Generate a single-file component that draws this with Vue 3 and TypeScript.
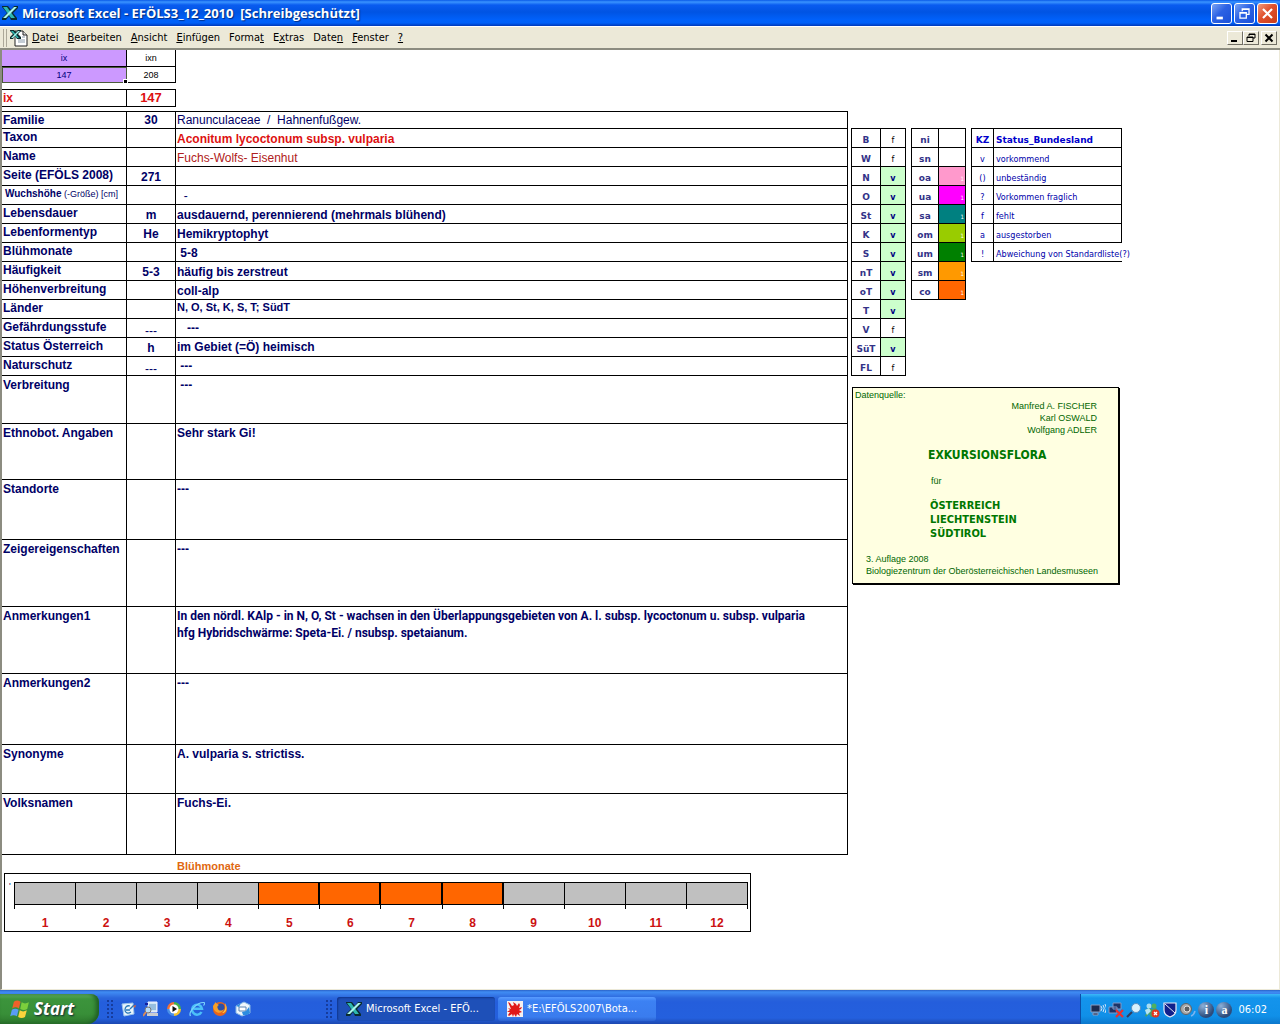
<script setup lang="ts">
interface Row {
  label: string
  code?: string
  value?: string
  height: string
  tone?: string
}

interface MenuEntry {
  before: string
  key: string
  after: string
}

const menu: MenuEntry[] = [
  { before: '', key: 'D', after: 'atei' },
  { before: '', key: 'B', after: 'earbeiten' },
  { before: '', key: 'A', after: 'nsicht' },
  { before: '', key: 'E', after: 'infügen' },
  { before: 'Forma', key: 't', after: '' },
  { before: 'E', key: 'x', after: 'tras' },
  { before: 'Date', key: 'n', after: '' },
  { before: '', key: 'F', after: 'enster' },
  { before: '', key: '?', after: '' },
]

const rows: Row[] = [
  { label: 'Familie', code: '30', value: 'Ranunculaceae  /  Hahnenfußgew.', height: 'h-first', tone: 'plain' },
  { label: 'Taxon', value: 'Aconitum lycoctonum subsp. vulparia', height: 'h-line', tone: 'taxon' },
  { label: 'Name', value: 'Fuchs-Wolfs- Eisenhut', height: 'h-line', tone: 'name' },
  { label: 'Seite (EFÖLS 2008)', code: '271', height: 'h-line' },
  { label: 'Wuchshöhe', value: '  -', height: 'h-line', tone: 'plain' },
  { label: 'Lebensdauer', code: 'm', value: 'ausdauernd, perennierend (mehrmals blühend)', height: 'h-line' },
  { label: 'Lebenformentyp', code: 'He', value: 'Hemikryptophyt', height: 'h-line' },
  { label: 'Blühmonate', value: ' 5-8', height: 'h-line' },
  { label: 'Häufigkeit', code: '5-3', value: 'häufig bis zerstreut', height: 'h-line' },
  { label: 'Höhenverbreitung', value: 'coll-alp', height: 'h-line' },
  { label: 'Länder', value: 'N, O, St, K, S, T; SüdT', height: 'h-line', tone: 'small' },
  { label: 'Gefährdungsstufe', code: '---', value: '   ---', height: 'h-line', tone: 'middle' },
  { label: 'Status Österreich', code: 'h', value: 'im Gebiet (=Ö) heimisch', height: 'h-line', tone: 'middle' },
  { label: 'Naturschutz', code: '---', value: ' ---', height: 'h-line', tone: 'middle' },
  { label: 'Verbreitung', value: ' ---', height: 'h-48', tone: 'top' },
  { label: 'Ethnobot. Angaben', value: 'Sehr stark Gi!', height: 'h-56', tone: 'top' },
  { label: 'Standorte', value: '---', height: 'h-60', tone: 'top' },
  { label: 'Zeigereigenschaften', value: '---', height: 'h-67', tone: 'top' },
  {
    label: 'Anmerkungen1',
    value:
      'In den nördl. KAlp - in N, O, St - wachsen in den Überlappungsgebieten von A. l. subsp. lycoctonum u. subsp. vulparia\nhfg Hybridschwärme: Speta-Ei. / nsubsp. spetaianum.',
    height: 'h-67',
    tone: 'top note',
  },
  { label: 'Anmerkungen2', value: '---', height: 'h-71', tone: 'top' },
  { label: 'Synonyme', value: 'A. vulparia s. strictiss.', height: 'h-49', tone: 'top' },
  { label: 'Volksnamen', value: 'Fuchs-Ei.', height: 'h-61', tone: 'top' },
]

const lands: [string, string][] = [
  ['B', 'f'], ['W', 'f'], ['N', 'v'], ['O', 'v'], ['St', 'v'], ['K', 'v'], ['S', 'v'],
  ['nT', 'v'], ['oT', 'v'], ['T', 'v'], ['V', 'f'], ['SüT', 'v'], ['FL', 'f'],
]

const levels: string[] = ['ni', 'sn', 'oa', 'ua', 'sa', 'om', 'um', 'sm', 'co']

const legend: [string, string][] = [
  ['v', 'vorkommend'],
  ['()', 'unbeständig'],
  ['?', 'Vorkommen fraglich'],
  ['f', 'fehlt'],
  ['a', 'ausgestorben'],
  ['!', 'Abweichung von Standardliste(?)'],
]

const isBloom = (month: number): boolean => month >= 5 && month <= 8
</script>

<template>
  <div class="desktop">
    <header class="titlebar">
      <svg class="icon16" viewBox="0 0 16 16" aria-hidden="true">
        <path d="M0 1h6l3 4 3-4h4v2l-5 5 4 5v2H9l-2-4-3 4H0v-2l5-5-5-6z" fill="#0a2c30" />
        <path d="M1 2h4l8 11H9z" fill="#2fb8b0" />
        <path d="M15 2h-3L1 13h3z" fill="#a8f4ec" />
      </svg>
      <h1>Microsoft Excel - EFÖLS3_12_2010&nbsp; [Schreibgeschützt]</h1>
      <div class="winbtns">
        <button type="button" class="win" aria-label="Minimieren">
          <svg viewBox="0 0 21 21"><path d="M5 14h7v3H5z" fill="#fff" /></svg>
        </button>
        <button type="button" class="win" aria-label="Verkleinern">
          <svg viewBox="0 0 21 21" fill="none" stroke="#fff">
            <path d="M8 8V5.500h7.500v6H13M8 6h8" stroke-width="1.400" />
            <path d="M5.500 9.500h7v6h-7zM5 10h8" stroke-width="1.400" />
          </svg>
        </button>
        <button type="button" class="win close" aria-label="Schließen">
          <svg viewBox="0 0 21 21"><path d="M5.500 5.500l10 10M15.500 5.500l-10 10" stroke="#fff" stroke-width="2.400" /></svg>
        </button>
      </div>
    </header>

    <nav class="menubar" aria-label="Menü">
      <span class="grip"></span>
      <svg class="docicon" viewBox="0 0 18 18" aria-hidden="true">
        <path d="M5 2h8l4 4v11H5z" fill="#fff" stroke="#222" />
        <path d="M13 2v4h4" fill="#ddd" stroke="#222" />
        <path d="M12 8h3M8 11h7M8 13h7" stroke="#8899aa" />
        <path d="M0 1h4l2 2 2-2h3v1L8 5l3 3v2H7L5 7 3 10H0V8l3-3-3-3z" fill="#0a2c30" />
        <path d="M1 2h2l6 7H7z" fill="#2fb8b0" />
        <path d="M10 2H8L1 9h2z" fill="#a8f4ec" />
      </svg>
      <button v-for="m in menu" :key="m.key" type="button" class="menuitem">{{ m.before }}<u>{{ m.key }}</u>{{ m.after }}</button>
      <div class="mdi">
        <button type="button" aria-label="Fenster minimieren">
          <svg viewBox="0 0 14 12"><path d="M3 8h6v2H3z" /></svg>
        </button>
        <button type="button" aria-label="Fenster verkleinern">
          <svg viewBox="0 0 14 12" fill="none" stroke="#000"><path d="M5 4V2h6v4H9M5 2.500h6" /><path d="M3 5h6v4.500H3zM3 5.500h6" /></svg>
        </button>
        <button type="button" class="apart" aria-label="Fenster schließen">
          <svg viewBox="0 0 14 12"><path d="M3.500 2.500l7 7M10.500 2.500l-7 7" stroke="#000" stroke-width="2" /></svg>
        </button>
      </div>
    </nav>

    <main class="sheet">
      <section class="record">
        <table class="grid key">
          <colgroup><col class="c-label" /><col class="c-code" /></colgroup>
          <tbody>
            <tr class="h-first"><td class="violet">ix</td><td>ixn</td></tr>
            <tr class="h-16"><td class="violet selected">147<span class="handle"></span></td><td>208</td></tr>
          </tbody>
        </table>
        <table class="grid current">
          <colgroup><col class="c-label" /><col class="c-code" /></colgroup>
          <tbody>
            <tr class="h-first"><th scope="row">ix</th><td>147</td></tr>
          </tbody>
        </table>
        <table class="grid facts">
          <colgroup><col class="c-label" /><col class="c-code" /><col /></colgroup>
          <tbody>
            <tr v-for="r in rows" :key="r.label" :class="r.height">
              <th v-if="r.label === 'Wuchshöhe'" scope="row" class="tiny">{{ r.label }}<span class="unit"> (-Größe) [cm]</span></th>
              <th v-else scope="row">{{ r.label }}</th>
              <td class="code" :class="{ dash: r.code === '---' }">{{ r.code }}</td>
              <td class="value" :class="r.tone">{{ r.value }}</td>
            </tr>
          </tbody>
        </table>

        <h2>Blühmonate</h2>
        <div class="chart" role="img" aria-label="Blühmonate 5 bis 8">
          <span class="tick">'</span>
          <ol>
            <li v-for="m in 12" :key="m" :class="{ bloom: isBloom(m) }">
              <span class="bar"></span>
              <span class="month">{{ m }}</span>
            </li>
          </ol>
        </div>
      </section>

      <aside class="side">
        <div class="tables">
          <table class="grid boxed lands">
            <colgroup><col class="w29" /><col class="w25" /></colgroup>
            <tbody>
              <tr v-for="l in lands" :key="l[0]" class="h-line">
                <th scope="row">{{ l[0] }}</th>
                <td :class="{ present: l[1] === 'v' }">{{ l[1] }}</td>
              </tr>
            </tbody>
          </table>
          <table class="grid boxed levels">
            <colgroup><col class="w27" /><col class="w27" /></colgroup>
            <tbody>
              <tr v-for="(l, i) in levels" :key="l" class="h-line">
                <th scope="row">{{ l }}</th>
                <td :class="'lv-' + l">{{ i > 1 ? '1' : '' }}</td>
              </tr>
            </tbody>
          </table>
          <table class="grid boxed legend">
            <colgroup><col class="w22" /><col class="w128" /></colgroup>
            <thead>
              <tr class="h-line"><th scope="col">KZ</th><th scope="col">Status_Bundesland</th></tr>
            </thead>
            <tbody>
              <tr v-for="l in legend" :key="l[0]" class="h-line">
                <td>{{ l[0] }}</td><td>{{ l[1] }}</td>
              </tr>
            </tbody>
          </table>
        </div>
        <div class="source">
          <p class="caption">Datenquelle:</p>
          <p class="authors">Manfred A. FISCHER<br />Karl OSWALD<br />Wolfgang ADLER</p>
          <p class="book">EXKURSIONSFLORA</p>
          <p class="for">für</p>
          <p class="countries">ÖSTERREICH<br />LIECHTENSTEIN<br />SÜDTIROL</p>
          <p class="edition">3. Auflage 2008<br />Biologiezentrum der Oberösterreichischen Landesmuseen</p>
        </div>
      </aside>
    </main>

    <footer class="taskbar">
      <button type="button" class="start">
        <svg viewBox="0 0 18 18" aria-hidden="true">
          <path d="M3.500 2.500c2-1.500 4-1.500 6 0L8 8.500c-2-1.300-4-1.300-6 0z" fill="#f0612a" />
          <path d="M10.500 3c2 1.300 4 1.300 6.500 0L15.500 9c-2 1.300-4 1.300-6.300 0z" fill="#7ccf3c" />
          <path d="M1.700 9.700c2-1.300 4-1.300 6 0L6.200 15.500c-2-1.300-4-1.300-6 0z" fill="#5a9cf5" />
          <path d="M8.800 10.200c2 1.300 4 1.300 6.300 0L13.500 16.200c-2 1.300-4 1.300-6.200 0z" fill="#fcd33c" />
        </svg>
        <span>Start</span>
      </button>
      <span class="dots"></span>
      <div class="quick">
        <button type="button" aria-label="Desktop anzeigen">
          <svg viewBox="0 0 16 16">
            <path d="M2 3l11-1 1 11-10 2z" fill="#e8f4fc" stroke="#9cc4ea" />
            <path d="M10 5c-3-1-5 1-5 4s3 4 6 2M6 9h4M10 8l4-4" fill="none" stroke="#2878b8" stroke-width="1.300" />
            <path d="M13 5l3-1-1 3z" fill="#d8643c" />
          </svg>
        </button>
        <button type="button" aria-label="Suche">
          <svg viewBox="0 0 16 16">
            <path d="M5 1h9v10H5z" fill="#cfe6f6" stroke="#eef" /><path d="M6 4h7M6 6h7M6 8h7" stroke="#5c94c8" />
            <path d="M4 12h11v3H4z" fill="#c8ccd2" /><circle cx="5" cy="9" r="3" fill="#b8dcf8" stroke="#777" />
            <path d="M3 11l-3 4" stroke="#d88a5a" stroke-width="2" /><path d="M2 2h3v2H2z" fill="#1020a0" />
          </svg>
        </button>
        <button type="button" aria-label="Media Player">
          <svg viewBox="0 0 16 16">
            <path d="M8 1a7 7 0 0 1 7 7H8z" fill="#46b04a" /><path d="M1 8a7 7 0 0 1 7-7v7z" fill="#f07038" />
            <path d="M8 15a7 7 0 0 1-7-7h7z" fill="#4a90e8" /><path d="M15 8a7 7 0 0 1-7 7V8z" fill="#f4c430" />
            <circle cx="8" cy="8" r="4.500" fill="#fff" /><path d="M6.500 5l4.500 3-4.500 3z" fill="#111" />
          </svg>
        </button>
        <button type="button" aria-label="Internet Explorer">
          <svg viewBox="0 0 16 16" fill="none">
            <path d="M12.500 11a5 5 0 1 1 .5-3.200H4.500" stroke="#4cc0f8" stroke-width="2.400" />
            <path d="M1.500 15C-1 11 8 1 15 1.500c1 .5.500 2-.5 3" stroke="#7cd4fc" stroke-width="1.200" />
          </svg>
        </button>
        <button type="button" aria-label="Firefox">
          <svg viewBox="0 0 16 16">
            <circle cx="8" cy="8" r="7" fill="#e8641c" /><circle cx="8.500" cy="6.500" r="4" fill="#2c50a8" />
            <path d="M1 5c1-2 2-2 2-4 2 2 3 2 4 3-2 1-2 2-1 4 1 2 4 2 6 0-1 4-6 5-9 2-1-1-2-3-2-5z" fill="#f8a028" />
            <path d="M13 2c2 3 2 7 0 9-1 1-2 1-3 1 3-2 4-5 3-10z" fill="#fcc83c" />
          </svg>
        </button>
        <button type="button" aria-label="E-Mail">
          <svg viewBox="0 0 16 16">
            <path d="M1 5l8-4 6 3v8l-8 3-6-3z" fill="#eef6fc" stroke="#88b8e4" />
            <path d="M4 6h7v4H4z" fill="#fff" stroke="#5c84b0" />
            <path d="M8 14l-1-3 4-1 3-4 1 6-3 2zM1 5l5-3-2 4z" fill="#2c8ce0" />
          </svg>
        </button>
      </div>
      <span class="dots second"></span>
      <div class="tasks">
        <button type="button" class="task active">
          <svg class="icon16" viewBox="0 0 16 16" aria-hidden="true">
            <path d="M0 1h6l3 4 3-4h4v2l-5 5 4 5v2H9l-2-4-3 4H0v-2l5-5-5-6z" fill="#0a2c30" />
            <path d="M1 2h4l8 11H9z" fill="#2fb8b0" />
            <path d="M15 2h-3L1 13h3z" fill="#a8f4ec" />
          </svg>
          <span>Microsoft Excel - EFÖ...</span>
        </button>
        <button type="button" class="task">
          <svg class="icon16" viewBox="0 0 16 16" aria-hidden="true">
            <path d="M0 0h16v16H0z" fill="#f4f0f0" />
            <path d="M1 1l2 1 2 3 2-1-1-3 3 2 1 2 2-3 1 2-1 3 3-1-1 2-2 1 3 2-3 1 1 3-3-2-1 3-2-3-1 3-1-3-3 2-1-1 2-3H0l3-2-2-2 3 1z" fill="#e01818" />
          </svg>
          <span>*E:\EFÖLS2007\Bota...</span>
        </button>
      </div>
      <div class="tray">
        <svg viewBox="0 0 16 16"><path d="M1 3h9v7H1zM3 11h5v2H3z" fill="#1c2c50" stroke="#8a9cc0" /><path d="M11 4q2 2 0 5M13 3q2.500 3 0 7M15 2q3 4 0 9" fill="none" stroke="#cfe4fa" /></svg>
        <svg viewBox="0 0 16 16"><path d="M5 1h8v6H5zM1 5h8v6H1z" fill="#1c3468" stroke="#8098c8" /><path d="M8 8l7 7M15 8l-7 7" stroke="#e83030" stroke-width="2.200" /></svg>
        <svg viewBox="0 0 16 16"><circle cx="10" cy="6" r="4.500" fill="#d8f0fc" stroke="#5c90c0" /><path d="M6 10l-5 5" stroke="#303c60" stroke-width="2.200" /></svg>
        <svg viewBox="0 0 16 16"><circle cx="5" cy="4" r="2.500" fill="#a8dcf0" /><circle cx="10" cy="4" r="2.500" fill="#50b060" /><path d="M1 8l4-2 3 1 4-1 2 3-3 1v5H7l-2-3-3 3-1-2 2-2z" fill="#48a068" /><path d="M1 8l4-2 2 3-4 4-1-2z" fill="#b4e4f4" /><circle cx="11.500" cy="11.500" r="4" fill="#e03820" /><path d="M10 10l3 3M13 10l-3 3" stroke="#fff" stroke-width="1.300" /></svg>
        <svg viewBox="0 0 16 16"><path d="M2 1h12v7c0 4-3 6-6 7-3-1-6-3-6-7z" fill="#10208c" stroke="#e8ecf8" stroke-width="1.200" /><path d="M3 2l10 9" stroke="#e8ecf8" /></svg>
        <svg viewBox="0 0 16 16"><circle cx="6" cy="7" r="5.500" fill="#a8a8a8" stroke="#606468" /><circle cx="7" cy="7" r="3" fill="#5c6064" stroke="#ddd" /><path d="M11 14q3-1 4-5M9 15" fill="none" stroke="#7cb4f0" stroke-width="1.500" /></svg>
        <span class="ball">i</span>
        <span class="ball">a</span>
        <time>06:02</time>
      </div>
    </footer>
  </div>
</template>

<style>
body {
  margin: 0;
  background: #fff;
}
</style>

<style scoped>
.desktop {
  display: flex;
  flex-direction: column;
  min-height: 100vh;
  overflow: hidden;
  font: 12px/16px "Liberation Sans", Arial, sans-serif;
  color: #000066;
}

button {
  margin: 0;
  padding: 0;
  border: 0;
  background: none;
  font: inherit;
  color: inherit;
}

svg {
  display: block;
}

.icon16 {
  width: 16px;
  height: 16px;
  flex: none;
}

.titlebar {
  display: flex;
  align-items: center;
  height: 26px;
  padding: 0 2px;
  gap: 4px;
  background: linear-gradient(#0a5ae8 0, #3a94ff 2px, #0a5cf0 5px, #0054e3 12px, #0061fb 20px, #0060f8 23px, #0038b8 26px);
  color: #fff;
}

.titlebar h1 {
  flex: 1;
  margin: 0;
  font: bold 13px/20px "Open Sans", "Noto Sans", sans-serif;
  text-shadow: 1px 1px 1px #002c80;
  white-space: nowrap;
}

.winbtns {
  display: flex;
  gap: 2px;
}

.win {
  box-sizing: border-box;
  width: 21px;
  height: 21px;
  border: 1px solid #fff;
  border-radius: 3px;
  background: linear-gradient(135deg, #7ba4f4, #2c62e4 45%, #1a50d8);
}

.win svg {
  width: 19px;
  height: 19px;
}

.win.close {
  background: linear-gradient(135deg, #f09a7c, #e0502c 45%, #c83c18);
}

.menubar {
  display: flex;
  align-items: center;
  box-sizing: border-box;
  height: 24px;
  border-top: 1px solid #fff;
  border-bottom: 2px solid #8c8c80;
  padding-left: 3px;
  background: #ece9d8;
  color: #000;
}

.grip {
  width: 2px;
  height: 18px;
  margin-right: 3px;
  border-left: 1px solid #aca899;
  border-right: 1px solid #aca899;
}

.docicon {
  width: 18px;
  height: 18px;
}

.menuitem {
  padding: 0 5px 0 4px;
  font: 11px/16px "DejaVu Sans Condensed", "DejaVu Sans", sans-serif;
}

.mdi {
  display: flex;
  margin-left: auto;
  padding-right: 3px;
}

.mdi button {
  box-sizing: border-box;
  width: 16px;
  height: 14px;
  border: 1px solid;
  border-color: #fff #716f64 #716f64 #fff;
  background: #ece9d8;
}

.mdi .apart {
  margin-left: 2px;
}

.mdi svg {
  width: 14px;
  height: 12px;
}

.sheet {
  display: flex;
  flex: 1;
  gap: 3px;
  border-left: 2px solid #8c8c80;
  border-right: 1px solid #ece9d8;
  border-bottom: 1px solid #ece9d8;
  background: #fff;
}

.record {
  flex: 1;
  min-width: 0;
}

.grid {
  table-layout: fixed;
  border-spacing: 0;
}

.grid th,
.grid td {
  box-sizing: border-box;
  padding: 0 1px;
  border-right: 1px solid #000;
  border-bottom: 1px solid #000;
  white-space: pre;
}

.c-label { width: 125px; }
.c-code { width: 49px; }
.h-16 { height: 16px; }
.h-first { height: 17px; }
.h-line { height: 19px; }
.h-48 { height: 48px; }
.h-49 { height: 49px; }
.h-56 { height: 56px; }
.h-60 { height: 60px; }
.h-61 { height: 61px; }
.h-67 { height: 67px; }
.h-71 { height: 71px; }

.key {
  width: 174px;
  color: #000;
  font-size: 9px;
  line-height: 12px;
  text-align: center;
}

.key .violet {
  background: #cc99ff;
  color: #000080;
}

.key .selected {
  position: relative;
  outline: 1px solid #4c5c3c;
  outline-offset: -1px;
}

.handle {
  position: absolute;
  right: -2px;
  bottom: -2px;
  width: 3px;
  height: 3px;
  background: #000;
  border: 1px solid #fff;
}

.current {
  width: 174px;
  margin-top: 6px;
  border-top: 1px solid #000;
  color: #dd1111;
  font-weight: bold;
}

.current th {
  text-align: left;
}

.current td {
  font-size: 13px;
  text-align: center;
}

.facts {
  width: 100%;
  margin-top: 4px;
  border-top: 1px solid #000;
  font-weight: bold;
}

.facts th {
  vertical-align: top;
  text-align: left;
}

.facts .tiny {
  padding-left: 3px;
  font-size: 10px;
}

.unit {
  font-weight: normal;
  font-size: 9px;
}

.code {
  vertical-align: bottom;
  text-align: center;
  line-height: 15px;
}

.facts .dash {
  font-weight: normal;
  line-height: 11px;
}

.value {
  vertical-align: bottom;
  line-height: 15px;
}

.value.plain {
  font-weight: normal;
}

.value.taxon {
  color: #dd1111;
}

.value.name {
  color: #b02020;
  font-weight: normal;
}

.value.small {
  vertical-align: top;
  font-size: 11px;
}

.value.middle {
  vertical-align: middle;
}

.value.top {
  vertical-align: top;
  line-height: 17px;
}

.value.note {
  font-family: Roboto, "Liberation Sans", sans-serif;
}

.facts tr:nth-child(n + 15) > * {
  padding-top: 1px;
}

h2 {
  margin: 0 0 0 175px;
  padding-top: 4px;
  font-size: 11px;
  line-height: 14px;
  color: #e06810;
}

.chart {
  display: flex;
  box-sizing: border-box;
  height: 59px;
  margin: 0 97px 0 2px;
  padding: 8px 2px 0 4px;
  border: 1px solid #000;
}

.tick {
  width: 5px;
  font-size: 9px;
  line-height: 8px;
}

.chart ol {
  display: flex;
  flex: 1;
  margin: 0;
  padding: 0;
  list-style: none;
}

.chart li {
  flex: 1;
  border-left: 1px solid #000;
  height: 27px;
}

.chart li:last-child {
  border-right: 1px solid #000;
}

.bar {
  display: block;
  height: 21px;
  border-top: 1px solid #000;
  border-bottom: 1px solid #000;
  background: #c0c0c0;
}

.bloom .bar {
  border-right: 1px solid #000;
  background: #ff6600;
}

.month {
  display: block;
  margin-top: 10px;
  font-weight: bold;
  color: #cc1111;
  text-align: center;
}

.side {
  width: 428px;
  flex: none;
  padding-top: 78px;
  font-size: 9px;
}

.tables {
  display: flex;
  align-items: flex-start;
  gap: 5px;
}

.boxed {
  border-top: 1px solid #000;
  border-left: 1px solid #000;
  font-family: "DejaVu Sans Condensed", "DejaVu Sans", sans-serif;
  line-height: 13px;
}

.boxed th,
.boxed td {
  vertical-align: bottom;
  text-align: center;
}

.w22 { width: 22px; }
.w25 { width: 25px; }
.w27 { width: 27px; }
.w29 { width: 29px; }
.w128 { width: 128px; }

.lands,
.levels {
  width: 55px;
  color: #333388;
}

.lands th,
.levels th,
.legend th {
  font-family: "DejaVu Sans", sans-serif;
}

.lands td {
  color: #000;
}

.lands .present {
  background: #ccffcc;
  color: #000080;
  font-weight: bold;
}

.levels td {
  color: #fff;
  font-size: 6px;
  text-align: right;
}

.levels .lv-oa { background: #ff99cc; }
.levels .lv-ua { background: #ff00ff; }
.levels .lv-sa { background: #008080; }
.levels .lv-om { background: #99cc00; }
.levels .lv-um { background: #008000; }
.levels .lv-sm { background: #ff9900; }
.levels .lv-co { background: #ff6600; }

.legend {
  width: 151px;
  color: #0000aa;
}

.legend th {
  color: #0000cc;
}

.legend th + th,
.legend td + td {
  padding-left: 2px;
  text-align: left;
}

.legend tr:last-child td + td {
  border-right: 0;
}

.source {
  box-sizing: border-box;
  width: 267px;
  height: 197px;
  margin: 11px 0 0 1px;
  padding: 2px 12px 0 2px;
  border: 1px solid #000;
  box-shadow: 1px 1px 0 #000;
  background: #ffffe1;
  color: #006600;
  line-height: 12px;
}

.source p {
  margin: 0;
}

.source .caption {
  line-height: 10px;
}

.source .authors {
  padding-right: 9px;
  text-align: right;
}

.source .book {
  margin: 11px 0 0 73px;
  font: bold 12px/16px "DejaVu Sans Condensed", "DejaVu Sans", sans-serif;
  color: #007700;
}

.source .for {
  margin: 12px 0 0 76px;
}

.source .countries {
  margin: 12px 0 0 75px;
  font: bold 11px/14px "DejaVu Sans Condensed", "DejaVu Sans", sans-serif;
  color: #007700;
}

.source .edition {
  margin: 12px 0 0 11px;
  white-space: nowrap;
}

.taskbar {
  display: flex;
  align-items: stretch;
  height: 34px;
  background: linear-gradient(#2a62c8 0, #3f8cf3 2px, #3a80ec 4px, #2a66dc 8px, #245edc 12px, #2460de 28px, #1c48b0 34px);
  color: #fff;
}

.start {
  display: flex;
  align-items: center;
  gap: 4px;
  box-sizing: border-box;
  width: 99px;
  margin-top: 4px;
  padding-left: 10px;
  border-radius: 0 8px 12px 0;
  background: linear-gradient(#69b869 0, #3c943c 5px, #388f38 20px, #2c762c 30px);
  box-shadow: inset -3px 0 4px #1f5c24;
  font: italic bold 17px/20px "Open Sans", "Noto Sans", sans-serif;
  text-shadow: 1px 1px 2px #112233;
}

.start svg {
  width: 20px;
  height: 20px;
}

.dots {
  width: 6px;
  margin: 10px 5px 4px 8px;
  background: radial-gradient(circle at 1px 1px, #163c9c 1px, transparent 1px) 0 0 / 4px 4px;
}

.quick {
  display: flex;
  align-items: center;
  gap: 7px;
  padding: 3px 0 0 2px;
}

.quick svg {
  width: 16px;
  height: 16px;
}

.dots.second {
  margin-left: 75px;
}

.tasks {
  display: flex;
  flex: 1;
  gap: 3px;
  padding-top: 7px;
}

.task {
  display: flex;
  align-items: center;
  gap: 4px;
  box-sizing: border-box;
  width: 158px;
  height: 24px;
  padding-left: 9px;
  border-radius: 3px;
  background: linear-gradient(#5a9cff 0, #3c81f3 4px, #3a7cee 20px, #2c62d0 24px);
  font: 11px/16px "DejaVu Sans Condensed", "DejaVu Sans", sans-serif;
  white-space: nowrap;
}

.task.active {
  background: #1e50b8;
  box-shadow: inset 1px 1px 2px #10348c;
}

.tray {
  display: flex;
  align-items: center;
  gap: 2px;
  box-sizing: border-box;
  padding: 2px 13px 0 9px;
  margin-top: 4px;
  border-left: 1px solid #0c4ea8;
  background: linear-gradient(#3cb8f8 0, #1494ec 4px, #1090e8 22px, #0c78cc 30px);
  font: 11px/16px "DejaVu Sans Condensed", "DejaVu Sans", sans-serif;
}

.tray svg {
  width: 16px;
  height: 16px;
}

.ball {
  width: 16px;
  height: 16px;
  border-radius: 50%;
  background: radial-gradient(circle at 5px 4px, #8cb0d8, #2c4c7c 11px);
  font: bold 12px/16px "Liberation Serif", serif;
  text-align: center;
}

.tray time {
  margin-left: 4px;
}
</style>
